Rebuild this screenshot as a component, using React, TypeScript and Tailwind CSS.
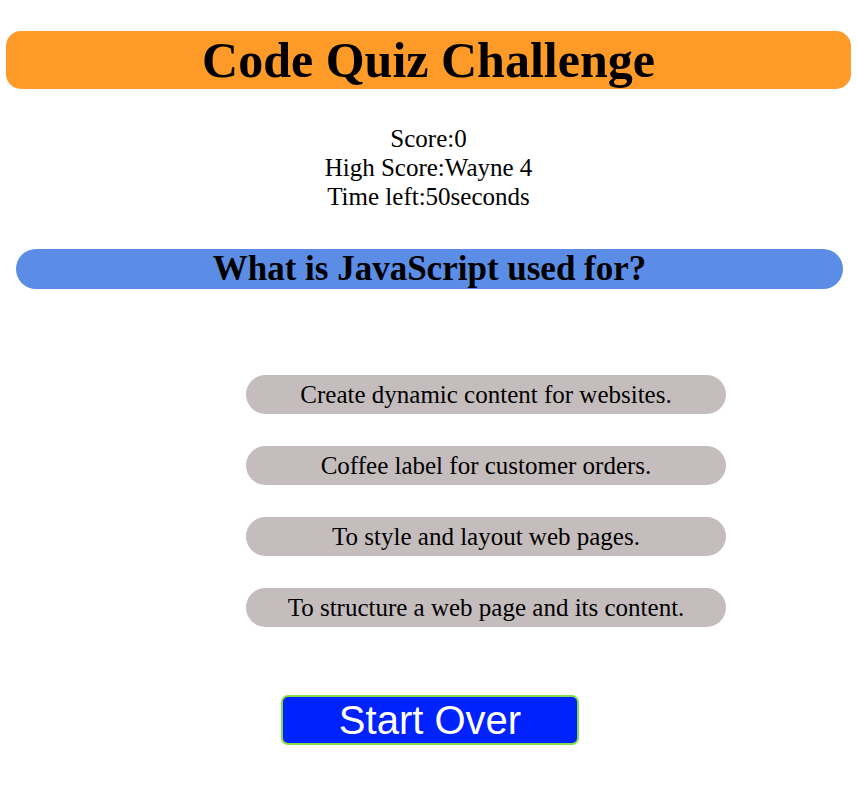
export default function App() {
  const answers = [
    "Create dynamic content for websites.",
    "Coffee label for customer orders.",
    "To style and layout web pages.",
    "To structure a web page and its content.",
  ];

  return (
    <div className="min-h-[793px] w-[857px] bg-white text-black font-['Liberation_Serif',serif]">
      {/* Header */}
      <header className="mx-[6px] pt-[31px]">
        <h1 className="h-[58px] rounded-[15px] bg-[#fd9a28] text-center text-[50px] font-bold leading-[58px]">
          Code Quiz Challenge
        </h1>
      </header>

      {/* Stats */}
      <div className="mt-[35px] flex flex-col items-center text-[25px] leading-[29px]">
        <p>Score:0</p>
        <p>High Score:Wayne 4</p>
        <p>Time left:50seconds</p>
      </div>

      {/* Question */}
      <h2 className="ml-[16px] mr-[14px] mt-[38px] h-[40px] rounded-full bg-[#5b8de6] text-center text-[35px] font-bold leading-[40px]">
        What is JavaScript used for?
      </h2>

      {/* Answers */}
      <div className="ml-[246px] mt-[86px] flex w-[480px] flex-col gap-[32px]">
        {answers.map((a) => (
          <button
            key={a}
            className="h-[39px] rounded-full bg-[#c5bdbd] text-center text-[25px] leading-[39px]"
          >
            {a}
          </button>
        ))}
      </div>

      {/* Start over */}
      <button className="ml-[281px] mt-[68px] h-[50px] w-[298px] rounded-[7px] border-2 border-[#87d84a] bg-[#0022ff] font-['Liberation_Sans',Arial,sans-serif] text-[40px] leading-[44px] text-white">
        Start Over
      </button>
    </div>
  );
}
